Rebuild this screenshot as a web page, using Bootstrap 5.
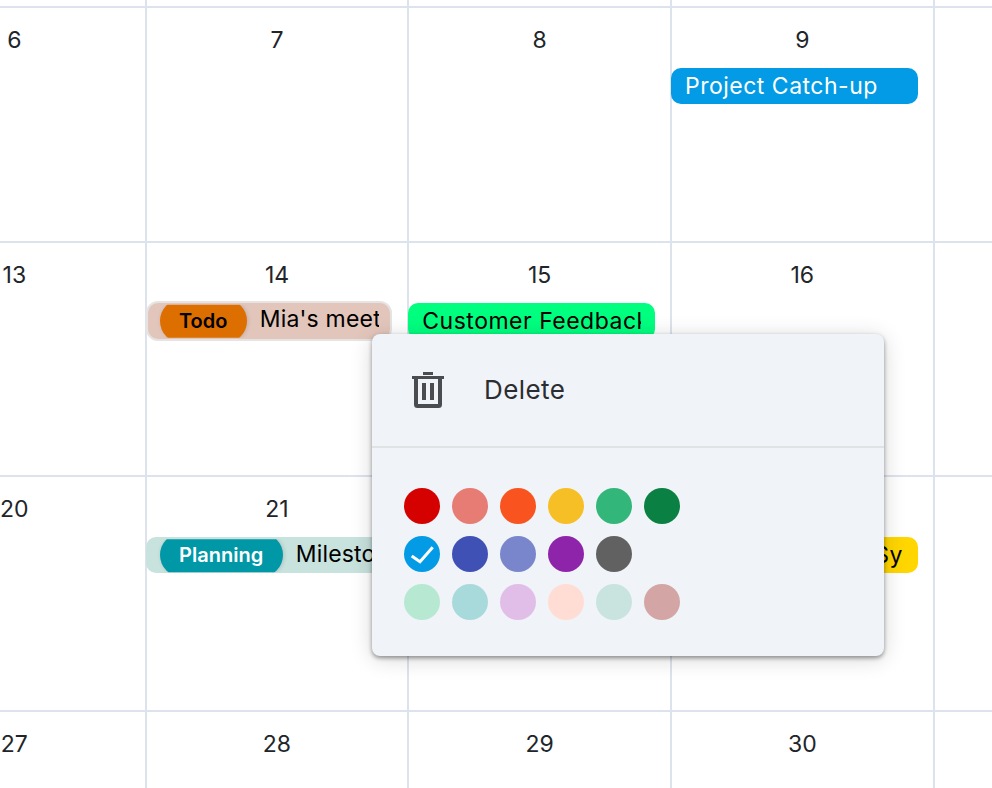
<!DOCTYPE html>
<html lang="en">
<head>
<meta charset="utf-8">
<title>Calendar</title>
<link href="https://cdn.jsdelivr.net/npm/bootstrap@5.3.0/dist/css/bootstrap.min.css" rel="stylesheet">
<style>
html,body{height:788px;overflow:hidden;background:#fff;}
body{font-family:"Inter","Liberation Sans",sans-serif;color:#212529;}
.cal-grid{display:grid;grid-template-columns:repeat(5,262.67px);grid-auto-rows:234.67px;margin-left:-118px;margin-top:-228.67px;width:1314px;}
.cal-cell{border-left:2px solid #dde3ed;border-top:2px solid #dde3ed;padding-top:16px;min-width:0;}
.cal-date{font-size:23px;line-height:32px;height:32px;text-align:center;margin-bottom:12px;}
.cal-ev{width:247px;height:36px;margin-left:-1px;border-radius:10px;font-size:23px;letter-spacing:.5px;line-height:36px;padding:0 14px;white-space:nowrap;overflow:hidden;color:#000;}
.cal-ev>span{display:block;overflow:hidden;}
.ev-blue{background:#039be5;color:#fff;}
.ev-green{background:#00ff7f;}
.ev-yellow{background:#ffd600;}
.ev-tagged{display:flex;align-items:center;gap:13px;margin-left:-1px;padding:0 11px 0 12px;overflow:hidden;white-space:nowrap;font-size:23px;letter-spacing:.2px;color:#000;}
.ev-todo{width:246px;height:40px;margin-top:-2px;background:#e3c6bb;border:2px solid #e6e3e3;border-radius:12px;}
.ev-plan{width:260px;height:36px;background:#c8e2dd;border-radius:10px;padding-left:14px;}
.ev-pill{flex:none;height:44px;border-radius:22px;font-size:20px;font-weight:600;letter-spacing:0;line-height:44px;text-align:center;box-shadow:1px 0 4px rgba(0,0,0,.14);clip-path:inset(6px -6px 5px -6px);}
.pill-todo{width:87px;background:#dd6f00;color:#000;}
.pill-plan{width:123px;background:#0097a7;color:#fff;}
.ev-label{flex:1 1 0;min-width:0;overflow:hidden;margin-top:-3px;}
.ctx-menu{position:absolute;left:372px;top:334px;width:512px;height:322px;background:#f0f3f8;border-radius:8px;box-shadow:0 2px 4px rgba(0,0,0,.4),0 3px 22px rgba(0,0,0,.16);}
.ctx-del{height:112px;padding-left:40px;gap:40px;font-size:26px;letter-spacing:.4px;color:#2b2d30;}
.ctx-del span{margin-top:-2px;}
.ctx-rule{height:2px;background:#e0e2e3;}
.ctx-swatches{padding:40px 0 0 32px;gap:12px;}
.sw{width:36px;height:36px;border-radius:50%;}
.sw-row{gap:12px;}
</style>
</head>
<body>
<div class="cal-grid">
  <div class="cal-cell"></div><div class="cal-cell"></div><div class="cal-cell"></div><div class="cal-cell"></div><div class="cal-cell"></div>

  <div class="cal-cell"><div class="cal-date">6</div></div>
  <div class="cal-cell"><div class="cal-date">7</div></div>
  <div class="cal-cell"><div class="cal-date">8</div></div>
  <div class="cal-cell"><div class="cal-date">9</div><div class="cal-ev ev-blue"><span>Project Catch-up</span></div></div>
  <div class="cal-cell"></div>

  <div class="cal-cell"><div class="cal-date">13</div></div>
  <div class="cal-cell"><div class="cal-date">14</div>
    <div class="ev-tagged ev-todo"><span class="ev-pill pill-todo">Todo</span><span class="ev-label">Mia's meeting</span></div></div>
  <div class="cal-cell"><div class="cal-date">15</div><div class="cal-ev ev-green"><span>Customer Feedback</span></div></div>
  <div class="cal-cell"><div class="cal-date">16</div></div>
  <div class="cal-cell"></div>

  <div class="cal-cell"><div class="cal-date">20</div></div>
  <div class="cal-cell"><div class="cal-date">21</div>
    <div class="ev-tagged ev-plan"><span class="ev-pill pill-plan">Planning</span><span class="ev-label">Milestone</span></div></div>
  <div class="cal-cell"><div class="cal-date">22</div></div>
  <div class="cal-cell"><div class="cal-date">23</div><div class="cal-ev ev-yellow"><span>Marketing Team Sync</span></div></div>
  <div class="cal-cell"></div>

  <div class="cal-cell"><div class="cal-date">27</div></div>
  <div class="cal-cell"><div class="cal-date">28</div></div>
  <div class="cal-cell"><div class="cal-date">29</div></div>
  <div class="cal-cell"><div class="cal-date">30</div></div>
  <div class="cal-cell"></div>
</div>

<div class="ctx-menu">
  <div class="ctx-del d-flex align-items-center">
    <svg width="32" height="36" viewBox="0 0 32 36" fill="none" stroke="#4a4c4f" aria-hidden="true">
      <path d="M0 5.500H32" stroke-width="3"/>
      <path d="M11 1.500H21" stroke-width="3"/>
      <path d="M4 6V32.500Q4 34 5.500 34H26.500Q28 34 28 32.500V6" stroke-width="4"/>
      <path d="M12 11V28M20 11V28" stroke-width="4"/>
    </svg>
    <span>Delete</span>
  </div>
  <div class="ctx-rule"></div>
  <div class="ctx-swatches d-flex flex-column">
    <div class="sw-row d-flex">
      <div class="sw" style="background:#d50000"></div>
      <div class="sw" style="background:#e67c73"></div>
      <div class="sw" style="background:#f9541f"></div>
      <div class="sw" style="background:#f6bf26"></div>
      <div class="sw" style="background:#33b679"></div>
      <div class="sw" style="background:#0b8043"></div>
    </div>
    <div class="sw-row d-flex">
      <div class="sw d-flex align-items-center justify-content-center" style="background:#039be5">
        <svg width="24" height="20" viewBox="0 0 24 20" fill="none" stroke="#fff" stroke-width="3" aria-hidden="true"><path d="M1.700 12L10 17.700L22.700 3.300"/></svg>
      </div>
      <div class="sw" style="background:#3f51b5"></div>
      <div class="sw" style="background:#7986cb"></div>
      <div class="sw" style="background:#8e24aa"></div>
      <div class="sw" style="background:#616161"></div>
    </div>
    <div class="sw-row d-flex">
      <div class="sw" style="background:#b7e8d1"></div>
      <div class="sw" style="background:#a8dadc"></div>
      <div class="sw" style="background:#e1bee7"></div>
      <div class="sw" style="background:#ffddd4"></div>
      <div class="sw" style="background:#c9e4df"></div>
      <div class="sw" style="background:#d4a5a5"></div>
    </div>
  </div>
</div>
<script src="https://cdn.jsdelivr.net/npm/bootstrap@5.3.0/dist/js/bootstrap.bundle.min.js"></script>
</body>
</html>
